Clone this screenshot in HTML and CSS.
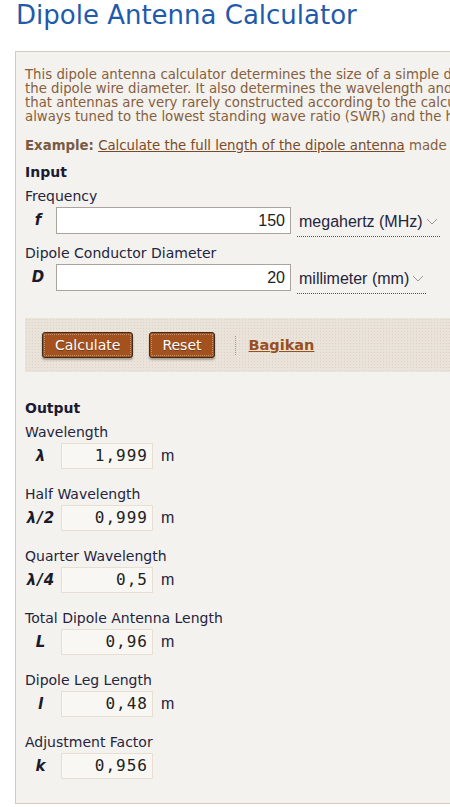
FILE: index.html
```html
<!DOCTYPE html>
<html lang="en">
  <head>
    <meta charset="UTF-8" />
    <meta name="viewport" content="width=device-width, initial-scale=1.0" />
    <title>Dipole Antenna Calculator</title>
    <link rel="stylesheet" href="styles.css">
  </head>
  <body>
    <h1 class="title">Dipole Antenna Calculator</h1>
    <div class="calculator">
      <p class="intro">
        This dipole antenna calculator determines the size of a simple dipole antenna for a given frequency and<br />
        the dipole wire diameter. It also determines the wavelength and the half and quarter wavelength. Note<br />
        that antennas are very rarely constructed according to the calculated length because they are<br />
        always tuned to the lowest standing wave ratio (SWR) and the highest bandwidth.
      </p>
      <p class="example">
        <b>Example:</b> <a href="#">Calculate the full length of the dipole antenna</a> made of a 20 mm tube
      </p>

      <h3 class="section">Input</h3>
      <div class="label">Frequency</div>
      <div class="row">
        <span class="sym sym-in">f</span>
        <input class="field" type="text" value="150" />
        <span class="unit-select">megahertz (MHz)
          <svg width="12" height="7" viewBox="0 0 12 7"><path d="M1 1 L6 6 L11 1" fill="none" stroke="#999" stroke-width="1"/></svg>
        </span>
      </div>
      <div class="label">Dipole Conductor Diameter</div>
      <div class="row">
        <span class="sym sym-in">D</span>
        <input class="field" type="text" value="20" />
        <span class="unit-select">millimeter (mm)
          <svg width="12" height="7" viewBox="0 0 12 7"><path d="M1 1 L6 6 L11 1" fill="none" stroke="#999" stroke-width="1"/></svg>
        </span>
      </div>

      <div class="actions">
        <button type="button" class="btn">Calculate</button>
        <button type="button" class="btn">Reset</button>
        <span class="divider"></span>
        <a href="#" class="share">Bagikan</a>
      </div>

      <h3 class="section section-out">Output</h3>
      <div class="label">Wavelength</div>
      <div class="out-row">
        <span class="sym">λ</span>
        <span class="result">1,999</span>
        <span class="unit">m</span>
      </div>
      <div class="label gap">Half Wavelength</div>
      <div class="out-row">
        <span class="sym">λ/2</span>
        <span class="result">0,999</span>
        <span class="unit">m</span>
      </div>
      <div class="label gap">Quarter Wavelength</div>
      <div class="out-row">
        <span class="sym">λ/4</span>
        <span class="result">0,5</span>
        <span class="unit">m</span>
      </div>
      <div class="label gap">Total Dipole Antenna Length</div>
      <div class="out-row">
        <span class="sym">L</span>
        <span class="result">0,96</span>
        <span class="unit">m</span>
      </div>
      <div class="label gap">Dipole Leg Length</div>
      <div class="out-row">
        <span class="sym">l</span>
        <span class="result">0,48</span>
        <span class="unit">m</span>
      </div>
      <div class="label gap">Adjustment Factor</div>
      <div class="out-row">
        <span class="sym">k</span>
        <span class="result">0,956</span>
      </div>
    </div>
  </body>
</html>
```

FILE: styles.css
```css
html,
body {
  overflow: hidden;
}

body {
  margin: 0;
  padding: 0 0 0 15px;
  background: #fff;
  font-family: "DejaVu Sans", Verdana, sans-serif;
}

.title {
  margin: 0 0 21px 1px;
  font-size: 26px;
  font-weight: normal;
  line-height: 30px;
  color: #1f5aab;
  white-space: nowrap;
}

.calculator {
  width: 720px;
  padding: 16px 9px 24px 9px;
  border: 1px solid #d6cbbb;
  background: #f4f2ee;
  color: #2b2b45;
}

.intro,
.example {
  margin: 0;
  font-size: 13.3px;
  line-height: 14px;
  color: #86603e;
  white-space: nowrap;
}

.intro {
  margin-bottom: 15px;
}

.example b {
  color: #7a5a42;
}

.example a {
  color: #7a4a28;
}

.section {
  margin: 11px 0 0;
  font-size: 14px;
  line-height: 16px;
  color: #1a1a33;
}

.section-out {
  margin-top: 28px;
}

.label {
  margin-top: 8px;
  font-size: 14px;
  line-height: 16px;
  color: #24243e;
}

.label.gap {
  margin-top: 17px;
}

.row {
  display: flex;
  align-items: flex-start;
  margin-top: 3px;
}

.sym {
  width: 32px;
  margin-right: 4px;
  font-size: 15px;
  font-weight: bold;
  font-style: italic;
  letter-spacing: 1px;
  line-height: 26px;
  text-align: center;
  color: #1a1a2a;
}

.sym-in {
  width: 27px;
  line-height: 27px;
}

.field {
  box-sizing: border-box;
  width: 235px;
  height: 27px;
  margin: 0;
  padding: 0 5px 0 0;
  border: 1px solid #a9a59e;
  background: #fff;
  font-family: "Liberation Sans", Arial, sans-serif;
  font-size: 16px;
  text-align: right;
  color: #222;
}

.unit-select {
  display: flex;
  align-items: center;
  gap: 3px;
  height: 29px;
  margin-left: 6px;
  padding: 0 2px;
  border-bottom: 1px dotted #555;
  font-family: "Liberation Sans", Arial, sans-serif;
  font-size: 16px;
  color: #24243e;
}

.actions {
  display: flex;
  align-items: center;
  margin-top: 24px;
  padding: 14px 17px;
  background-color: #e9e3da;
  background-image: radial-gradient(#dbd3c7 0.7px, transparent 0.8px);
  background-size: 3px 3px;
}

.btn {
  height: 26px;
  margin-right: 16px;
  padding: 0 12px;
  border: 1px solid #3f2a20;
  border-radius: 3px;
  background: #a3511e;
  box-shadow: 0 2px 2px rgba(60, 40, 20, 0.35);
  outline: 1px dotted rgba(255, 220, 180, 0.45);
  outline-offset: -3px;
  font-family: "DejaVu Sans", Verdana, sans-serif;
  font-size: 14px;
  color: #fff;
  text-shadow: 0 1px 0 rgba(0, 0, 0, 0.3);
  cursor: pointer;
}

.btn + .btn {
  margin-right: 20px;
}

.divider {
  width: 0;
  height: 19px;
  border-left: 1px dotted #999;
}

.share {
  margin-left: 13px;
  font-size: 14.5px;
  font-weight: bold;
  color: #9a4f1e;
}

.out-row {
  display: flex;
  align-items: center;
  margin-top: 3px;
}

.result {
  box-sizing: border-box;
  width: 92px;
  height: 26px;
  padding-right: 4px;
  border: 1px solid #e7dfd2;
  background: #f9f7f3;
  font-family: "DejaVu Sans Mono", "Liberation Mono", monospace;
  font-size: 16px;
  letter-spacing: 1px;
  line-height: 24px;
  text-align: right;
  color: #222;
}

.unit {
  margin-left: 8px;
  font-family: "Liberation Sans", Arial, sans-serif;
  font-size: 16px;
  color: #24243e;
}
```
